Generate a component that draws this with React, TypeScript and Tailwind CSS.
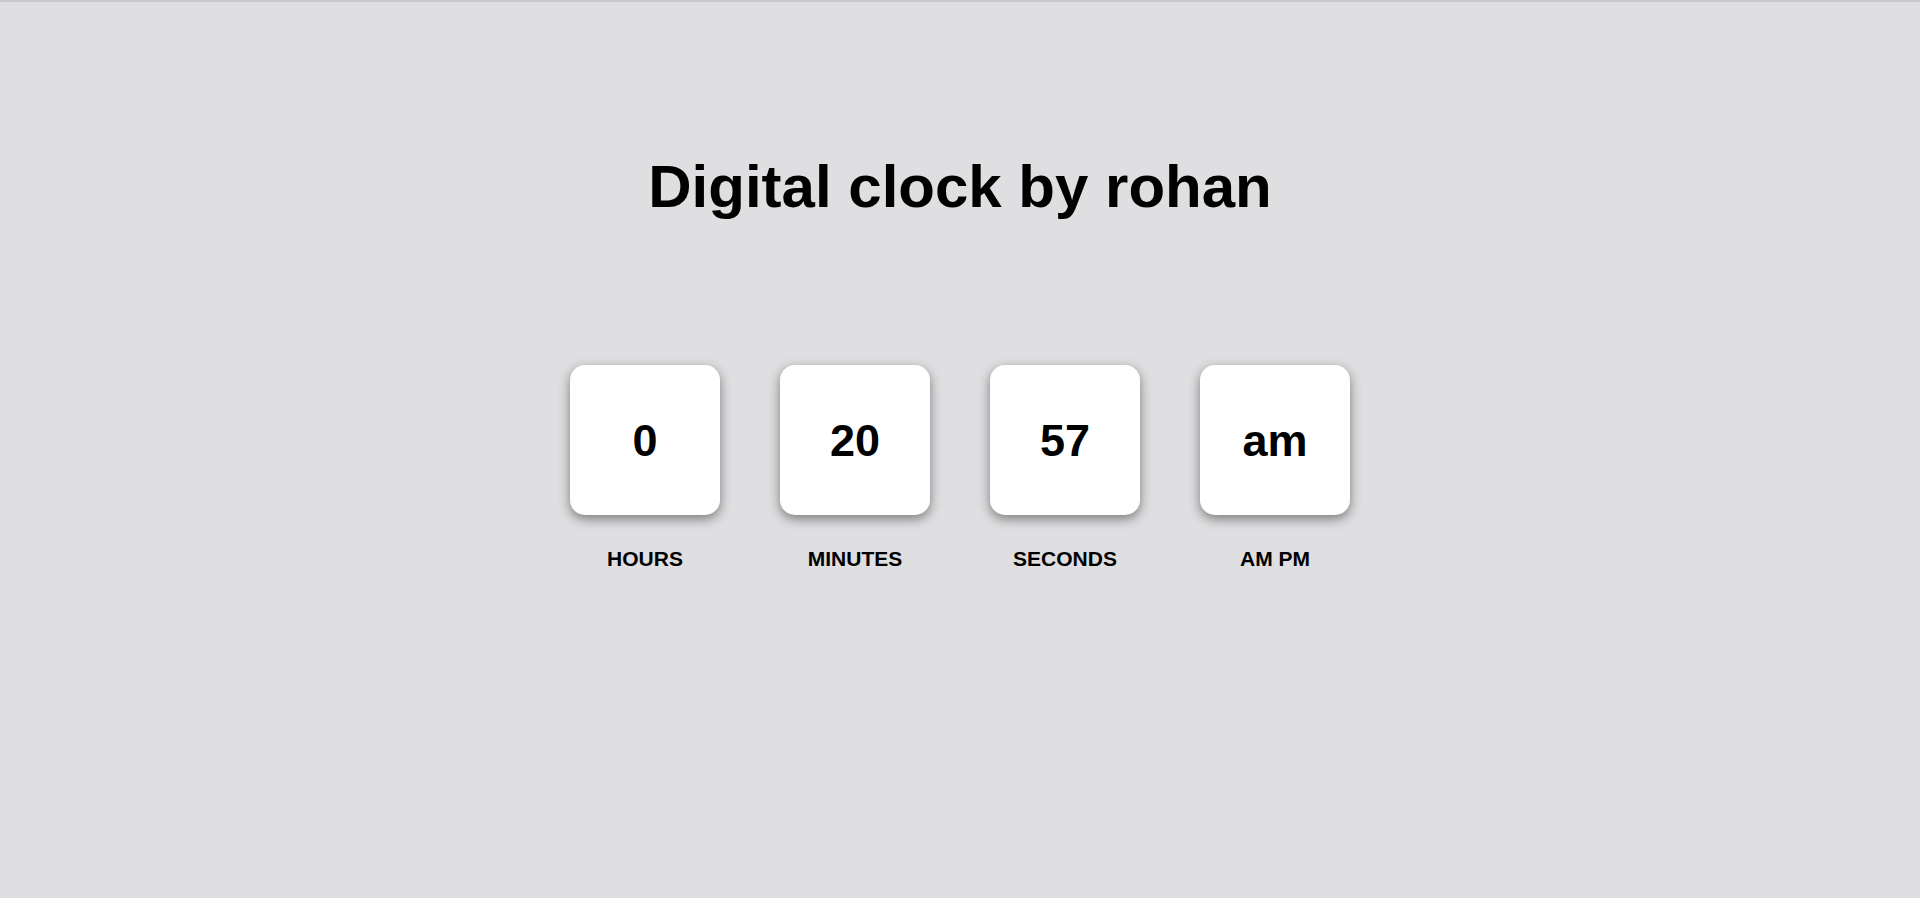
import React from "react";

const items = [
  { value: "0", label: "HOURS" },
  { value: "20", label: "MINUTES" },
  { value: "57", label: "SECONDS" },
  { value: "am", label: "AM PM" },
];

export default function App() {
  return (
    <div className="min-h-screen bg-[#dfdfe1] border-t-2 border-[#c9c9cc] flex flex-col items-center text-black font-['Liberation_Sans',Arial,sans-serif]">
      <h1 className="mt-[155px] text-[60px] leading-none font-bold">Digital clock by rohan</h1>
      <div className="mt-[148px] flex gap-[60px]">
        {items.map((it) => (
          <div key={it.label} className="flex flex-col items-center">
            <div className="w-[150px] h-[150px] bg-white rounded-[15px] shadow-[0_4px_12px_rgba(0,0,0,0.45)] flex items-center justify-center text-[45px] font-bold leading-none">
              {it.value}
            </div>
            <div className="mt-[33px] text-[21px] leading-none font-bold">{it.label}</div>
          </div>
        ))}
      </div>
    </div>
  );
}
